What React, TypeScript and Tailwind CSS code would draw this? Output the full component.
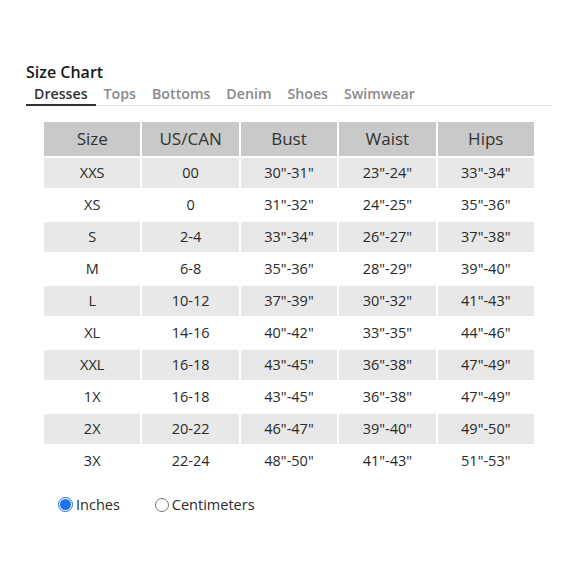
const tabs = ["Dresses", "Tops", "Bottoms", "Denim", "Shoes", "Swimwear"];

const headers = ["Size", "US/CAN", "Bust", "Waist", "Hips"];

const rows = [
  ["XXS", "00", '30"-31"', '23"-24"', '33"-34"'],
  ["XS", "0", '31"-32"', '24"-25"', '35"-36"'],
  ["S", "2-4", '33"-34"', '26"-27"', '37"-38"'],
  ["M", "6-8", '35"-36"', '28"-29"', '39"-40"'],
  ["L", "10-12", '37"-39"', '30"-32"', '41"-43"'],
  ["XL", "14-16", '40"-42"', '33"-35"', '44"-46"'],
  ["XXL", "16-18", '43"-45"', '36"-38"', '47"-49"'],
  ["1X", "16-18", '43"-45"', '36"-38"', '47"-49"'],
  ["2X", "20-22", '46"-47"', '39"-40"', '49"-50"'],
  ["3X", "22-24", '48"-50"', '41"-43"', '51"-53"'],
];

export default function App() {
  return (
    <div className="w-[580px] h-[580px] bg-white font-['Open_Sans',sans-serif] text-[#222]">
      <div className="pt-[61px] pl-[26px] pr-[28px]">
        <h1 className="text-[16px] font-semibold leading-[22px] text-[#1a1a1a]">Size Chart</h1>
        <div className="flex border-b border-[#e4e4e4] mt-[1px]">
          {tabs.map((t, i) => (
            <div
              key={t}
              className={
                i === 0
                  ? "px-2 text-[14.2px] font-semibold leading-[19px] pb-[1px] text-[#333] border-b-2 border-[#333] -mb-[1px]"
                  : "px-2 text-[14.2px] font-semibold leading-[19px] pb-[1px] text-[#8a8a8a]"
              }
            >
              {t}
            </div>
          ))}
        </div>
      </div>

      <table className="ml-[42px] mt-[14px] border-collapse w-[494px] table-fixed">
        <thead>
          <tr className="bg-[#c9c9c9]">
            {headers.map((h) => (
              <th
                key={h}
                className="border-2 border-white h-[36px] text-[17px] font-normal text-[#333]"
              >
                {h}
              </th>
            ))}
          </tr>
        </thead>
        <tbody>
          {rows.map((r, i) => (
            <tr key={i} className={i % 2 === 0 ? "bg-[#e8e8e8]" : "bg-white"}>
              {r.map((c, j) => (
                <td
                  key={j}
                  className="border-2 border-white h-[32px] text-center text-[14.5px] text-[#2a2a2a]"
                >
                  {c}
                </td>
              ))}
            </tr>
          ))}
        </tbody>
      </table>

      <div className="flex items-center mt-[16px] ml-[58px] text-[14.5px] text-[#2a2a2a]">
        <label className="flex items-center">
          <span className="w-[15px] h-[15px] rounded-full border border-[#1a6fe0] flex items-center justify-center">
            <span className="w-[11px] h-[11px] rounded-full bg-[#1a73e8]" />
          </span>
          <span className="ml-[3px]">Inches</span>
        </label>
        <label className="flex items-center ml-[35px]">
          <span className="w-[14px] h-[14px] rounded-full border border-[#777] bg-white" />
          <span className="ml-[3px]">Centimeters</span>
        </label>
      </div>
    </div>
  );
}
